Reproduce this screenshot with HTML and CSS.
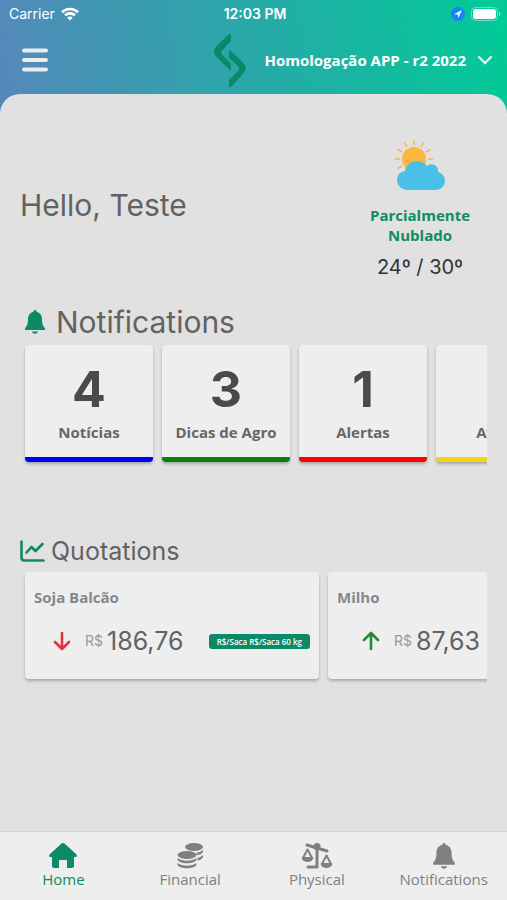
FILE: index.html
```html
<!DOCTYPE html>
<html lang="pt-BR">
<head>
    <meta charset="utf-8">
    <meta name="viewport" content="width=device-width, initial-scale=1">
    <title>Home</title>
    <link rel="stylesheet" href="styles.css">
</head>
<body>
    <header class="top">
        <div class="status">
            <div class="carrier">
                <span>Carrier</span>
                <svg width="18" height="14" viewBox="0 0 18 14" fill="none" stroke="#fff" stroke-width="2.6">
                    <path d="M1 5.2a11.5 11.5 0 0 1 16 0M4 8.4a7.2 7.2 0 0 1 10 0"/>
                    <path d="M9 13.6 6.2 10.8a4 4 0 0 1 5.6 0z" fill="#fff" stroke="none"/>
                </svg>
            </div>
            <span class="time">12:03 PM</span>
            <div class="battery">
                <svg width="14" height="14" viewBox="0 0 14 14">
                    <circle cx="7" cy="7" r="7" fill="#1684f8"/>
                    <path d="M11 3 3 7.200 6.700 7.500 7.200 11z" fill="#fff"/>
                </svg>
                <svg width="30" height="14" viewBox="0 0 30 14">
                    <rect x=".5" y=".5" width="26" height="13" rx="4" fill="none" stroke="#fff" stroke-opacity=".4"/>
                    <rect x="2" y="2" width="23" height="10" rx="3" fill="#fff"/>
                    <path d="M28 5c2 .5 2 3.500 0 4z" fill="#fff" fill-opacity=".5"/>
                </svg>
            </div>
        </div>
        <div class="toolbar">
            <button class="menu" type="button" aria-label="Menu">
                <svg width="26" height="24" viewBox="0 0 26 24" stroke="#e9edf0" stroke-width="4" stroke-linecap="round">
                    <path d="M2 2.500h22M2 12h22M2 21.500h22"/>
                </svg>
            </button>
            <svg class="logo" width="32" height="56" viewBox="0 0 32 56" fill="#08896a">
                <path d="M17 1v7L8.500 17q-2.500 2.500 0 5L17 31v7L3 24.500q-6-6 0-12L14 2q2-2 3-1z"/>
                <path d="M15 18q1-1 3 1l11 10.500q5.500 5.500 0 11.500L18 53q-2 2-3 1v-7l9-9q2-2.500 0-5l-9-8z"/>
            </svg>
            <button class="company" type="button">
                <span>Homologação APP - r2 2022</span>
                <svg width="16" height="10" viewBox="0 0 16 10" fill="none" stroke="#d9f5ee" stroke-width="2.400" stroke-linecap="round">
                    <path d="M2 2l6 6 6-6"/>
                </svg>
            </button>
        </div>
    </header>

    <main class="content">
        <section class="welcome">
            <h1>Hello, Teste</h1>
            <div class="weather">
                <svg width="52" height="52" viewBox="0 0 52 52">
                    <circle cx="20" cy="20" r="12" fill="#fbb83e"/>
                    <path d="M20 1v5M10.500 3.500l2.500 4.500M29.500 3.500 27 8M3.500 10.500 8 13M36.500 10.500 32 13M1 20h5M34 20h5M3.500 29.500 8 27" stroke="#f3b75a" stroke-width="1.500"/>
                    <path d="M13 51a10 10 0 0 1-10-10c0-5 3-8 8-9 1-6 6-10 12-10 4 0 8 2 10 5 5-4 12-1 11 6 4 1 7 4 7 9a9 9 0 0 1-9 9z" fill="#4bc0e6"/>
                </svg>
                <p class="sky">Parcialmente Nublado</p>
                <p class="temp">24º / 30º</p>
            </div>
        </section>

        <section class="notifications">
            <h2>
                <svg width="20" height="24" viewBox="0 0 20 24" fill="#0c8a68">
                    <path d="M10 0c-1 0-1.500.700-1.500 1.700C5 2.500 3 5.500 3 9c0 5-1.200 7.500-3 9.200V20h20v-1.800C18.200 16.500 17 14 17 9c0-3.500-2-6.500-5.500-7.300C11.500.700 11 0 10 0z"/>
                    <path d="M7 21.500h6c-.500 3-5.500 3-6 0z"/>
                </svg>
                Notifications
            </h2>
            <div class="cards">
                <a class="card blue" href="#"><strong>4</strong><span>Notícias</span></a>
                <a class="card green" href="#"><strong>3</strong><span>Dicas de Agro</span></a>
                <a class="card red" href="#"><strong>1</strong><span>Alertas</span></a>
                <a class="card yellow" href="#"><strong></strong><span>Avisos</span></a>
            </div>
        </section>

        <section class="quotations">
            <h2>
                <svg width="25" height="22" viewBox="0 0 25 22" fill="none" stroke="#0c8a68" stroke-width="2.600" stroke-linecap="round" stroke-linejoin="round">
                    <path d="M1.500 1.500v16q0 3 3 3H23.500M6.500 12.500l5-5.500 4 4 7-7"/>
                </svg>
                Quotations
            </h2>
            <div class="cards">
                <article class="quote">
                    <h3>Soja Balcão</h3>
                    <div class="price">
                        <svg width="18" height="20" viewBox="0 0 18 20" fill="none" stroke="#dc3545" stroke-width="2.600" stroke-linecap="round" stroke-linejoin="round">
                            <path d="M9 2v16M2 11l7 7 7-7"/>
                        </svg>
                        <small>R$</small>
                        <span class="value">186,76</span>
                        <span class="unit">R$/Saca R$/Saca 60 kg</span>
                    </div>
                </article>
                <article class="quote">
                    <h3>Milho</h3>
                    <div class="price up">
                        <svg width="18" height="20" viewBox="0 0 18 20" fill="none" stroke="#218c35" stroke-width="2.600" stroke-linecap="round" stroke-linejoin="round">
                            <path d="M9 18V2M2 9l7-7 7 7"/>
                        </svg>
                        <small>R$</small>
                        <span class="value">87,63</span>
                    </div>
                </article>
            </div>
        </section>
    </main>

    <nav class="tabs">
        <a class="active" href="#">
            <svg width="28" height="26" viewBox="0 0 28 26" fill="currentColor">
                <path d="M14 0q1 0 2 1l11 10q2 2 0 3h-2v9q0 2-2 2h-5v-7q0-1-1-1h-6q-1 0-1 1v7H5q-2 0-2-2v-9H1q-2-1 0-3L12 1q1-1 2-1z"/>
            </svg>
            Home
        </a>
        <a href="#">
            <svg width="28" height="26" viewBox="0 0 28 26" fill="currentColor">
                <ellipse cx="18" cy="4" rx="9" ry="4"/>
                <path d="M20 10q4-.500 7-3v2q-2 3-6 3zM21.500 15q3-.500 5.500-3v2.500q-2 2.500-5.500 3z"/>
                <ellipse cx="11" cy="12" rx="9.500" ry="4"/>
                <path d="M1.500 15c5 3.500 14 3.500 19 0v1.500c-1 5-18 5-19 0zM1.500 20c5 3.500 14 3.500 19 0v1.500c-1 5-18 5-19 0z"/>
            </svg>
            Financial
        </a>
        <a href="#">
            <svg width="32" height="26" viewBox="0 0 32 26" fill="none" stroke="currentColor" stroke-width="2.600" stroke-linecap="round" stroke-linejoin="round">
                <path d="M6 2l20 6M16 4v20H7" stroke-width="3"/>
                <path d="M6.500 6.500 2 15h9zM25.500 12.500l-4.500 8.500h9z" stroke-width="2"/>
                <circle cx="16" cy="3.500" r="3.500" fill="currentColor" stroke="none"/>
                <path d="M.5 14.500h12c-1 6-11 6-12 0zM19.500 20.500h12c-1 6-11 6-12 0z" fill="currentColor" stroke="none"/>
            </svg>
            Physical
        </a>
        <a href="#">
            <svg width="22" height="26" viewBox="0 0 20 24" fill="currentColor">
                <path d="M10 0c-1 0-1.500.700-1.500 1.700C5 2.500 3 5.500 3 9c0 5-1.200 7.500-3 9.200V20h20v-1.800C18.200 16.500 17 14 17 9c0-3.500-2-6.500-5.500-7.300C11.500.700 11 0 10 0z"/>
                <path d="M7 21.500h6c-.500 3-5.500 3-6 0z"/>
            </svg>
            Notifications
        </a>
    </nav>
</body>
</html>
```
FILE: styles.css
```css
* {
    box-sizing: border-box;
}
body {
    margin: 0;
    min-height: 100vh;
    display: flex;
    flex-direction: column;
    font-family: "Open Sans", "Noto Sans", sans-serif;
    font-size: 15px;
    line-height: 20px;
    background-color: #e1e1e1;
    color: #626262;
}
h1, h2, h3, p {
    margin: 0;
    font-weight: 400;
}
a {
    color: inherit;
    text-decoration: none;
}
button {
    padding: 0;
    border: 0;
    background: none;
    color: white;
    font: inherit;
}
svg {
    display: block;
    flex-shrink: 0;
}
.top {
    padding-bottom: 24px;
    background: linear-gradient(80deg, #5588bb, #28a9a8 50%, #00cb97);
    color: white;
}
.status {
    display: grid;
    grid-template-columns: 1fr auto 1fr;
    align-items: center;
    height: 28px;
    padding: 0 6px 0 9px;
    font: 14px/28px Inter, sans-serif;
}
.carrier, .battery {
    display: flex;
    align-items: center;
    gap: 6px;
}
.battery {
    justify-content: flex-end;
}
.time {
    font-weight: 600;
}
.toolbar {
    display: flex;
    align-items: center;
    height: 64px;
    padding: 0 14px 0 22px;
    margin-bottom: 2px;
}
.menu {
    margin-right: auto;
}
.logo {
    align-self: start;
    margin: 5px 18px 0 0;
}
.company {
    display: flex;
    align-items: center;
    gap: 11px;
    font-weight: 700;
    white-space: nowrap;
}
.content {
    flex: 1;
    margin-top: -24px;
    padding: 44px 20px 20px;
    border-radius: 20px 20px 0 0;
    background-color: #e1e1e1;
}
.welcome {
    display: flex;
    justify-content: space-between;
    align-items: center;
    height: 142px;
    padding-right: 12px;
}
.welcome h1 {
    padding-bottom: 8px;
    font: 30px/36px Inter, sans-serif;
}
.weather {
    display: flex;
    flex-direction: column;
    align-items: center;
    width: 110px;
    text-align: center;
}
.sky {
    margin-top: 14px;
    color: #0f8c62;
    font-weight: 700;
}
.temp {
    margin-top: 10px;
    color: #333;
    font: 20px/24px Inter, sans-serif;
}
h2 {
    display: flex;
    align-items: center;
}
.notifications h2 {
    gap: 11px;
    margin-top: 24px;
    padding-left: 5px;
    font: 30px/36px Inter, sans-serif;
}
.quotations h2 {
    gap: 6px;
    margin-top: 67px;
    font: 25px/32px Inter, sans-serif;
}
.cards {
    display: flex;
    gap: 9px;
    padding: 5px 0 6px 5px;
    overflow: hidden;
}
.card, .quote {
    flex-shrink: 0;
    border-radius: 4px;
    background-color: #eee;
    box-shadow: 0 2px 3px rgba(0, 0, 0, 0.25);
}
.card {
    display: flex;
    flex-direction: column;
    align-items: center;
    width: 128px;
    height: 117px;
    padding-top: 14px;
    border-bottom: 5px solid;
}
.card strong {
    height: 60px;
    color: #4a4a4a;
    font: 700 50px/60px Inter, sans-serif;
}
.card span {
    margin-top: 3px;
    color: #666;
    font-weight: 700;
}
.blue {
    border-color: #0000f0;
}
.green {
    border-color: #0a800a;
}
.red {
    border-color: #fa0000;
}
.yellow {
    border-color: #f5d410;
}
.quote {
    width: 294px;
    height: 107px;
    padding: 15px 9px;
}
.quote h3 {
    color: #82898e;
    font-size: 15px;
    font-weight: 700;
}
.price {
    display: flex;
    align-items: center;
    margin-top: 17px;
    padding-left: 19px;
    font-family: Inter, sans-serif;
}
.up {
    padding-left: 25px;
}
.price small {
    margin: 0 4px 0 14px;
    color: #999;
    font-size: 14px;
}
.value {
    color: #606266;
    font-size: 25px;
    line-height: 34px;
}
.unit {
    margin-left: auto;
    padding: 0 8px;
    border-radius: 3px;
    background-color: #0c8a68;
    color: white;
    font: 600 8px/15px "Open Sans", sans-serif;
    white-space: nowrap;
}
.tabs {
    display: flex;
    height: 69px;
    border-top: 1px solid #d6d6d6;
    background-color: #eee;
    color: #808080;
}
.tabs a {
    flex: 1;
    display: flex;
    flex-direction: column;
    align-items: center;
    padding-top: 11px;
}
.tabs .active {
    color: #0c8a68;
}
```
